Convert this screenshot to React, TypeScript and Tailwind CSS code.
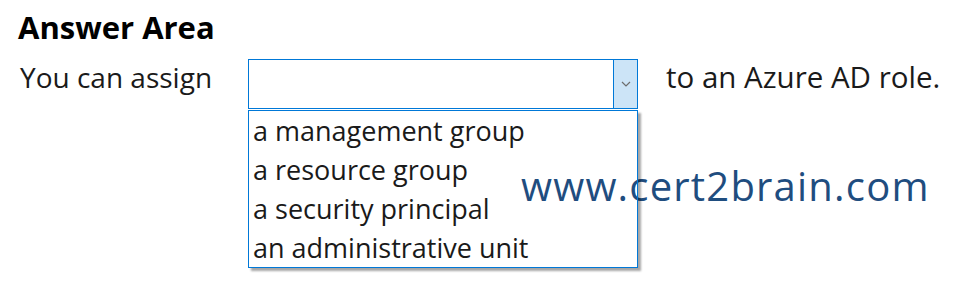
import React from "react";

export default function App() {
  const items = [
    "a management group",
    "a resource group",
    "a security principal",
    "an administrative unit",
  ];
  return (
    <div
      className="relative w-[964px] h-[294px] bg-white text-[#1a1a1a] overflow-hidden"
      style={{ fontFamily: '"Open Sans", "Noto Sans", sans-serif' }}
    >
      <div className="pl-[18px] pt-[7px]">
        <div className="text-[31px] font-bold leading-[40px] text-black">Answer Area</div>
        <div className="flex items-start mt-[12px]">
          <div className="w-[230px] pl-[2px] text-[28px] leading-[36px]">You can assign</div>
          <div className="w-[390px] flex flex-col relative z-10">
            <div className="h-[50px] flex border border-[#0078d7] bg-white">
              <div className="flex-1" />
              <div className="w-[24px] bg-[#cce4f7] border-l border-[#0078d7] flex items-center justify-center">
                <svg width="10" height="6" viewBox="0 0 10 6">
                  <path d="M1 1 L5 5 L9 1" fill="none" stroke="#6d6d6d" strokeWidth="1.2" />
                </svg>
              </div>
            </div>
            <div className="mt-[1px] h-[158px] border border-[#0078d7] shadow-[3px_3px_2px_rgba(0,0,0,0.35)] pl-[4px]">
              {items.map((t) => (
                <div key={t} className="text-[27px] leading-[39px] text-[#1a1a1a]">{t}</div>
              ))}
            </div>
          </div>
          <div className="ml-[28px] text-[29.5px] leading-[36px]">to an Azure AD role.</div>
        </div>
      </div>
      <div className="absolute left-[521px] top-[161px] text-[40px] leading-[50px] tracking-[1.2px] text-[#1f4d7f] z-0">
        www.cert2brain.com
      </div>
    </div>
  );
}
